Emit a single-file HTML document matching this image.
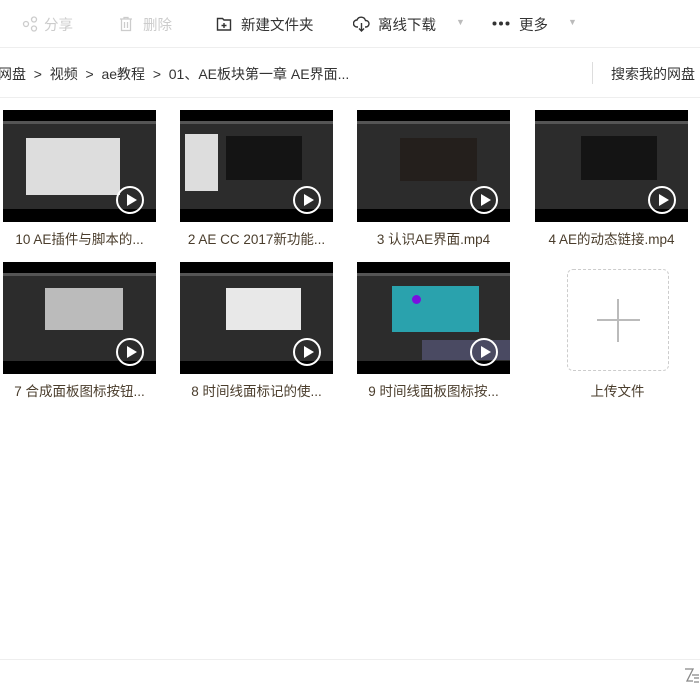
<!DOCTYPE html>
<html><head><meta charset="utf-8"><style>
*{margin:0;padding:0;box-sizing:border-box}
body{width:700px;height:700px;background:#fff;font-family:"Liberation Sans","Noto Sans CJK SC",sans-serif;position:relative;overflow:hidden;color:#333}
.a{position:absolute;white-space:nowrap}
.tb{font-size:14.5px;top:14px}
.ic{position:absolute;top:16px}
.thumb{position:absolute;width:153px;height:112px;background:#000}
.thumb .s{position:absolute;left:0;right:0;top:11px;bottom:13px;background:#2c2c2c}
.thumb .bar{position:absolute;left:0;right:0;top:11px;height:3px;background:#555}
.play{position:absolute;right:12px;bottom:8px;width:28px;height:28px;border:2.5px solid #fff;border-radius:50%}
.play:after{content:"";position:absolute;left:9px;top:6px;border-left:10px solid #fff;border-top:6px solid transparent;border-bottom:6px solid transparent}
.cap{position:absolute;font-size:13.5px;color:#4a3d2c;width:175px;text-align:center;white-space:nowrap}
</style></head><body>
<svg class="ic" style="left:22px" width="16" height="16" viewBox="0 0 16 16" fill="none" stroke="#ccc" stroke-width="1.3"><circle cx="4" cy="8" r="2.5"/><circle cx="12" cy="3.5" r="2.5"/><circle cx="12" cy="12.5" r="2.5"/></svg>
<div class="a tb" style="left:44px;color:#ccc">分享</div>
<svg class="ic" style="left:118px" width="16" height="16" viewBox="0 0 16 16" fill="none" stroke="#ccc" stroke-width="1.3"><path d="M2 3h12M6 3V1.5h4V3M3.5 3v11.5h9V3M6.5 6v6M9.5 6v6"/></svg>
<div class="a tb" style="left:143px;color:#ccc">删除</div>
<svg class="ic" style="left:216px" width="16" height="16" viewBox="0 0 16 16" fill="none" stroke="#333" stroke-width="1.4"><path d="M1.5 2.5h5l1.5 1.5h6.5v10h-13z"/><path d="M8 7v5M5.5 9.5h5"/></svg>
<div class="a tb" style="left:241px">新建文件夹</div>
<svg class="ic" style="left:353px" width="17" height="16" viewBox="0 0 17 16" fill="none" stroke="#333" stroke-width="1.4"><path d="M5 11H4a3.5 3.5 0 0 1 0-7 4.5 4.5 0 0 1 8.5 0.5A3.2 3.2 0 0 1 13 11h-1"/><path d="M8.5 7v8M6 12.5l2.5 2.5 2.5-2.5"/></svg>
<div class="a tb" style="left:378px">离线下载</div>
<div class="a" style="left:456px;top:17px;font-size:9px;color:#bbb">▼</div>
<svg class="a" style="left:492px;top:21px" width="18" height="5" viewBox="0 0 18 5" fill="#333"><circle cx="2.5" cy="2.5" r="2"/><circle cx="9" cy="2.5" r="2"/><circle cx="15.5" cy="2.5" r="2"/></svg>
<div class="a tb" style="left:519px">更多</div>
<div class="a" style="left:568px;top:17px;font-size:9px;color:#bbb">▼</div>
<div class="a" style="left:0;top:47px;width:700px;height:1px;background:#eee"></div>
<div class="a" style="left:-2px;top:64px;font-size:14px;color:#333">网盘 &nbsp;&gt;&nbsp; 视频 &nbsp;&gt;&nbsp; ae教程 &nbsp;&gt;&nbsp; 01、AE板块第一章 AE界面...</div>
<div class="a" style="left:592px;top:62px;width:1px;height:22px;background:#ddd"></div>
<div class="a" style="left:611px;top:64px;font-size:14px;color:#333">搜索我的网盘</div>
<div class="a" style="left:0;top:97px;width:700px;height:1px;background:#eee"></div>

<div class="thumb" style="left:3px;top:110px"><div class="s"></div><div class="bar"></div><div class="a" style="left:23px;top:28px;width:94px;height:57px;background:#ddd"></div><div class="play"></div></div>
<div class="thumb" style="left:180px;top:110px"><div class="s"></div><div class="bar"></div><div class="a" style="left:5px;top:24px;width:33px;height:57px;background:#ddd"></div><div class="a" style="left:46px;top:26px;width:76px;height:44px;background:#141414"></div><div class="play"></div></div>
<div class="thumb" style="left:357px;top:110px"><div class="s"></div><div class="bar"></div><div class="a" style="left:43px;top:28px;width:77px;height:43px;background:#241f1c"></div><div class="play"></div></div>
<div class="thumb" style="left:535px;top:110px"><div class="s"></div><div class="bar"></div><div class="a" style="left:46px;top:26px;width:76px;height:44px;background:#141414"></div><div class="play"></div></div>
<div class="cap" style="left:-8px;top:228px">10 AE插件与脚本的...</div>
<div class="cap" style="left:169px;top:228px">2 AE CC 2017新功能...</div>
<div class="cap" style="left:346px;top:228px">3 认识AE界面.mp4</div>
<div class="cap" style="left:524px;top:228px">4 AE的动态链接.mp4</div>

<div class="thumb" style="left:3px;top:262px"><div class="s"></div><div class="bar"></div><div class="a" style="left:42px;top:26px;width:78px;height:42px;background:#bbb"></div><div class="play"></div></div>
<div class="thumb" style="left:180px;top:262px"><div class="s"></div><div class="bar"></div><div class="a" style="left:46px;top:26px;width:75px;height:42px;background:#e8e8e8"></div><div class="play"></div></div>
<div class="thumb" style="left:357px;top:262px"><div class="s"></div><div class="bar"></div><div class="a" style="left:35px;top:24px;width:87px;height:46px;background:#2aa2ad"></div><div class="a" style="left:55px;top:33px;width:9px;height:9px;border-radius:50%;background:#7a10e0"></div><div class="a" style="left:65px;top:78px;width:88px;height:20px;background:#4a4a62"></div><div class="play"></div></div>
<div class="a" style="left:567px;top:269px;width:102px;height:102px;border:1.5px dashed #ccc;border-radius:6px"></div>
<div class="a" style="left:597px;top:319px;width:43px;height:2px;background:#bbb"></div>
<div class="a" style="left:617px;top:299px;width:2px;height:43px;background:#bbb"></div>
<div class="cap" style="left:-8px;top:380px">7 合成面板图标按钮...</div>
<div class="cap" style="left:169px;top:380px">8 时间线面标记的使...</div>
<div class="cap" style="left:346px;top:380px">9 时间线面板图标按...</div>
<div class="cap" style="left:530px;top:380px">上传文件</div>

<div class="a" style="left:0;top:659px;width:700px;height:1px;background:#eee"></div>
<svg class="a" style="left:684px;top:667px" width="16" height="20" viewBox="0 0 16 20" fill="none" stroke="#888" stroke-width="1.3"><path d="M1 2h8L3 14h6M8 8h7M10 11h5M10 15h5"/></svg>
</body></html>
